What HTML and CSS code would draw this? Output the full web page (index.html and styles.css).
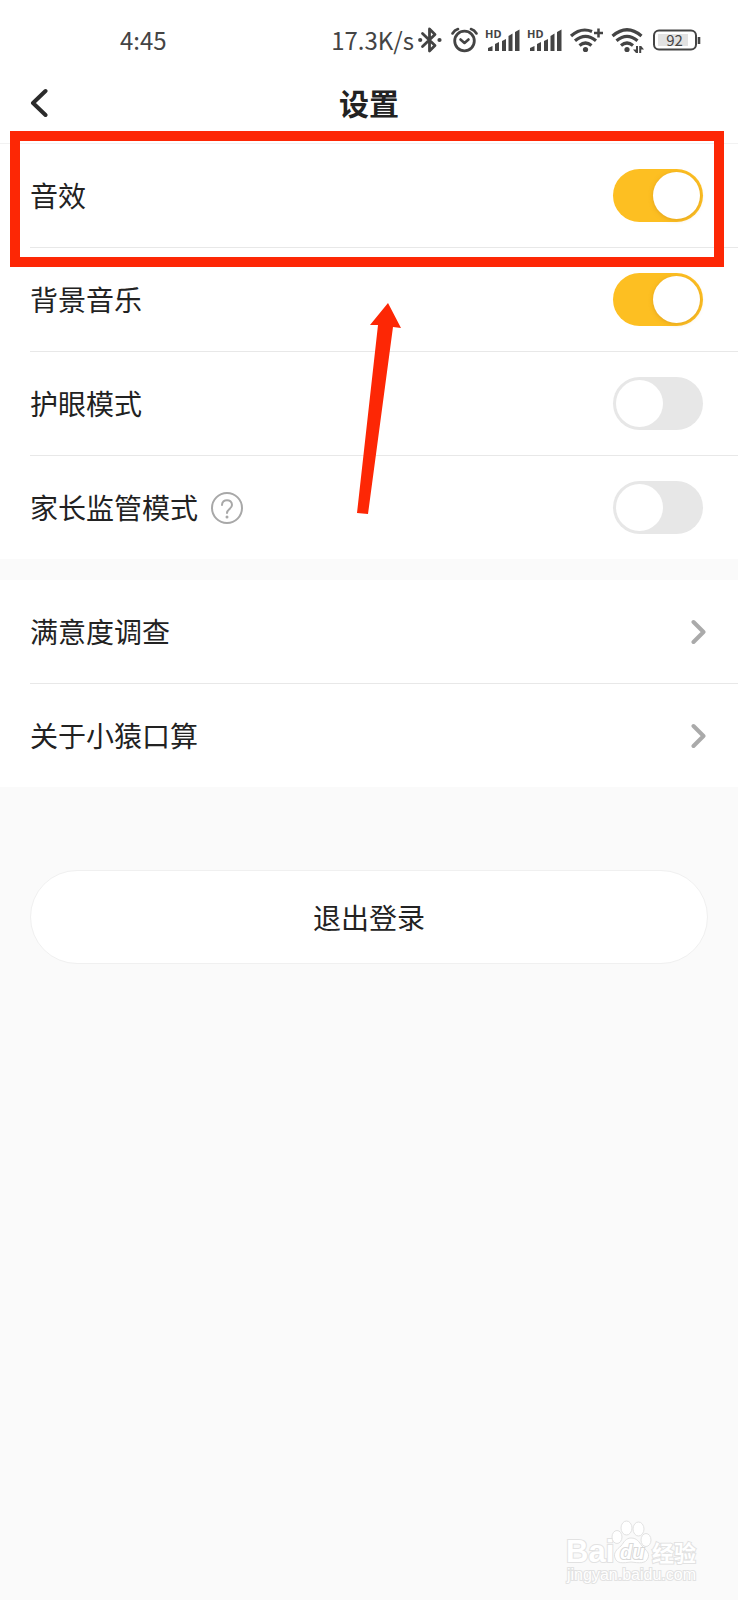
FILE: index.html
```html
<!DOCTYPE html>
<html lang="zh-CN">
<head>
<meta charset="utf-8">
<meta name="viewport" content="width=device-width, initial-scale=1">
<title>设置</title>
<link rel="stylesheet" href="styles.css">
</head>
<body>
<div class="screen">
  <div class="status">
    <span class="clock">4:45</span>
    <div class="indicators">
      <span class="speed">17.3K/s</span>
      <svg class="line-icon" width="26" height="28" viewBox="0 0 26 28" aria-hidden="true">
        <path d="M5.500 7.500 18 19.500 12.500 25V3L18 8.500 5.500 20.500" stroke-width="2.800"/>
        <circle class="dot" cx="3.200" cy="14" r="2.100"/><circle class="dot" cx="22.500" cy="14" r="2.100"/>
      </svg>
      <svg class="line-icon" width="28" height="28" viewBox="0 0 28 28" aria-hidden="true">
        <circle cx="14.500" cy="15" r="9.800" stroke-width="2.800"/>
        <path d="M10.500 13.500l4 3.500 4-3.500" stroke-width="2.600"/>
        <path d="M2.500 7.500Q4.500 4 8 3M26.500 7.500Q24.500 4 21 3" stroke-width="2.600"/>
      </svg>
      <svg class="solid-icon" width="35" height="28" viewBox="0 0 35 28" aria-hidden="true">
        <text class="hd" x="0" y="12">HD</text>
        <path d="M3 25v-3l4.500-2v5zM10 25v-7l4-2v9zM17 25v-10l4-2v12zM23.500 25V10l4-2.500V25zM30 25V6l4.500-2.500V25z"/>
      </svg>
      <svg class="solid-icon" width="35" height="28" viewBox="0 0 35 28" aria-hidden="true">
        <text class="hd" x="0" y="12">HD</text>
        <path d="M3 25v-3l4.500-2v5zM10 25v-7l4-2v9zM17 25v-10l4-2v12zM23.500 25V10l4-2.500V25zM30 25V6l4.500-2.500V25z"/>
      </svg>
      <svg class="line-icon" width="35" height="28" viewBox="0 0 35 28" aria-hidden="true">
        <path class="butt" d="M2 10Q12 1 23 5.500M6 14.800Q16.500 6 27 14.800M10.500 19.500Q16.500 14.500 22.500 19.500" stroke-width="3.200"/>
        <circle class="dot" cx="16.500" cy="23.500" r="2.600"/>
        <path class="butt" d="M29.500 2.500v9M25 7h9" stroke-width="2.500"/>
      </svg>
      <svg class="line-icon" width="33" height="28" viewBox="0 0 33 28" aria-hidden="true">
        <path class="butt" d="M1.500 10Q16-2.500 30.500 10M5.500 14.800Q16 6 26.500 14.800M10 19.500Q16 14.500 22 19.500" stroke-width="3.200"/>
        <circle class="dot" cx="16" cy="23.500" r="2.600"/>
        <path class="dot" d="M25 20h2v7h-2l-3-3.500h3zM28.200 27v-7h2l2.800 3.500h-2.800V27z"/>
      </svg>
      <svg class="line-icon" width="51" height="28" viewBox="0 0 51 28" aria-hidden="true">
        <rect class="charge" x="7" y="8" width="30" height="12"/>
        <rect x="3" y="4.500" width="42" height="19" rx="5" stroke-width="2"/>
        <path class="butt" d="M48 11v7" stroke-width="2.600"/>
        <text class="level" x="23.500" y="20" text-anchor="middle">92</text>
      </svg>
    </div>
  </div>

  <header class="header">
    <button class="back" type="button" aria-label="返回">
      <svg width="18" height="30" viewBox="0 0 18 30"><path d="M15.500 3 3 15 15.500 27"/></svg>
    </button>
    <h1 class="title">设置</h1>
  </header>

  <main>
    <section class="group">
      <div class="row">
        <label for="sound">音效</label>
        <input class="switch" id="sound" type="checkbox" checked>
      </div>
      <div class="row">
        <label for="music">背景音乐</label>
        <input class="switch" id="music" type="checkbox" checked>
      </div>
      <div class="row">
        <label for="eye">护眼模式</label>
        <input class="switch" id="eye" type="checkbox">
      </div>
      <div class="row">
        <div class="with-help">
          <label for="parent">家长监管模式</label>
          <button class="help" type="button" aria-label="帮助">
            <svg width="32" height="32" viewBox="0 0 32 32"><circle cx="16" cy="16" r="15"/><path d="M11 13C11 6.500 21 6.500 21 13C21 17 16 17 16 21"/><circle class="point" cx="16" cy="25" r="1.500"/></svg>
          </button>
        </div>
        <input class="switch" id="parent" type="checkbox">
      </div>
    </section>

    <section class="group">
      <a class="row link" href="#survey"><span>满意度调查</span>
        <svg class="chevron" width="15" height="26" viewBox="0 0 15 26"><path d="M2.500 3 12.500 13 2.500 23"/></svg>
      </a>
      <a class="row link" href="#about"><span>关于小猿口算</span>
        <svg class="chevron" width="15" height="26" viewBox="0 0 15 26"><path d="M2.500 3 12.500 13 2.500 23"/></svg>
      </a>
    </section>

    <button class="logout" type="button">退出登录</button>
  </main>

  <footer class="credit">
    <svg width="140" height="70" viewBox="0 0 140 70" role="img" aria-label="Baidu 经验">
      <g class="mark">
        <text class="brand" x="2" y="46">Bai</text>
        <ellipse cx="53" cy="21" rx="5" ry="6.500"/><ellipse cx="62.500" cy="12" rx="5.500" ry="7"/>
        <ellipse cx="74.500" cy="13" rx="5.500" ry="7"/><ellipse cx="82" cy="24" rx="5" ry="6.500"/>
        <path d="M67 22c6 0 8 4 11 8 4 4 8 7 6 12-2 6-9 5-17 4-8 1-14 2-16-4-2-5 2-9 6-12 3-4 5-8 10-8z"/>
        <text class="du" x="56" y="43">du</text>
        <text class="jy" x="88" y="45">经验</text>
        <text class="site" x="3" y="64">jingyan.baidu.com</text>
      </g>
    </svg>
  </footer>

  <div class="highlight"></div>
  <svg class="arrow" width="46" height="214" viewBox="0 0 46 214" aria-hidden="true"><path d="M32 1 45 26 37 25 12 212 1 211 22 23H14z"/></svg>
</div>
</body>
</html>
```
FILE: styles.css
```css
* { box-sizing: border-box; }

body {
  margin: 0;
  background: #fafafa;
  color: #222;
  font-family: "Noto Sans CJK SC", sans-serif;
  font-size: 28px;
}

button {
  border: 0;
  padding: 0;
  background: none;
  color: inherit;
  font: inherit;
}

svg { display: block; }

.screen {
  position: relative;
  display: flex;
  flex-direction: column;
  min-height: 100vh;
}

.status {
  display: flex;
  align-items: center;
  justify-content: space-between;
  height: 64px;
  padding: 16px 36px 0 120px;
  background: #fff;
  color: #444;
  font-size: 24px;
  line-height: 32px;
}

.indicators {
  display: flex;
  align-items: center;
  gap: 7px;
}

.speed { margin-right: -4px; }

.line-icon {
  fill: none;
  stroke: #444;
  stroke-linecap: round;
  stroke-linejoin: round;
}
.line-icon .butt { stroke-linecap: butt; }
.line-icon .dot { fill: #444; stroke: none; }
.line-icon .charge { fill: #e2e2e2; stroke: none; }
.solid-icon { fill: #444; }
.hd { font: bold 11px "Noto Sans", sans-serif; }
.level {
  fill: #444;
  stroke: none;
  font: 15px "Noto Sans CJK SC", sans-serif;
}

.header {
  display: grid;
  grid-template-columns: 1fr auto 1fr;
  align-items: center;
  height: 80px;
  padding: 0 30px 2px;
  border-bottom: 1px solid #f2f2f2;
  background: #fff;
}
.back {
  justify-self: start;
  fill: none;
  stroke: #2b2b2b;
  stroke-width: 4;
  stroke-linecap: round;
  stroke-linejoin: round;
}
.title {
  margin: 0;
  padding-bottom: 2px;
  font-size: 30px;
  line-height: 40px;
  font-weight: 700;
}

.group {
  padding-left: 30px;
  background: #fff;
}
.group + .group { margin-top: 21px; }

.row {
  display: flex;
  align-items: center;
  justify-content: space-between;
  height: 104px;
  padding-right: 35px;
  border-bottom: 1px solid #e8e8e8;
}
.row:last-child {
  height: 103px;
  border-bottom: 0;
}
.row label,
.row span { padding-bottom: 2px; }

.link {
  padding-right: 32px;
  color: inherit;
  text-decoration: none;
}
.chevron {
  fill: none;
  stroke: #aaa;
  stroke-width: 4;
  stroke-linecap: round;
  stroke-linejoin: round;
}

.with-help {
  display: flex;
  align-items: center;
  gap: 13px;
}
.help {
  fill: none;
  stroke: #a8a8a8;
  stroke-width: 2;
  stroke-linecap: round;
}
.help .point { fill: #a8a8a8; stroke: none; }

.switch {
  appearance: none;
  display: flex;
  width: 90px;
  height: 53px;
  margin: 0;
  padding: 3px;
  border-radius: 27px;
  background: #e7e7e7;
}
.switch::before {
  content: "";
  width: 47px;
  height: 47px;
  border-radius: 50%;
  background: #fff;
}
.switch:checked {
  justify-content: flex-end;
  background: #fdbf22;
}
.switch:checked::before { box-shadow: 0 1px 4px #c98a1e80; }

.logout {
  display: block;
  width: calc(100% - 60px);
  height: 94px;
  margin: 83px 30px 0;
  border: 1px solid #f0f0f0;
  border-radius: 47px;
  background: #fff;
}

.credit {
  display: flex;
  justify-content: flex-end;
  margin-top: auto;
  padding: 0 34px 14px 0;
}
.mark {
  fill: #fff;
  stroke: #e2e2e2;
  stroke-width: 1;
}
.mark text { paint-order: stroke; stroke-width: 2; }
.brand { font: bold 31px "Liberation Sans", sans-serif; }
.mark .du {
  stroke: #d8d8d8;
  font: italic bold 20px "Liberation Sans", sans-serif;
}
.jy { font: bold 22px "Noto Sans CJK SC", sans-serif; }
.site { font: 16px "Liberation Sans", sans-serif; }

.highlight {
  position: absolute;
  top: 131px;
  left: 10px;
  right: 14px;
  height: 136px;
  border: 10px solid #fd2705;
  pointer-events: none;
}
.arrow {
  position: absolute;
  top: 302px;
  left: calc(50% - 13px);
  fill: #fd2705;
  pointer-events: none;
}
```
